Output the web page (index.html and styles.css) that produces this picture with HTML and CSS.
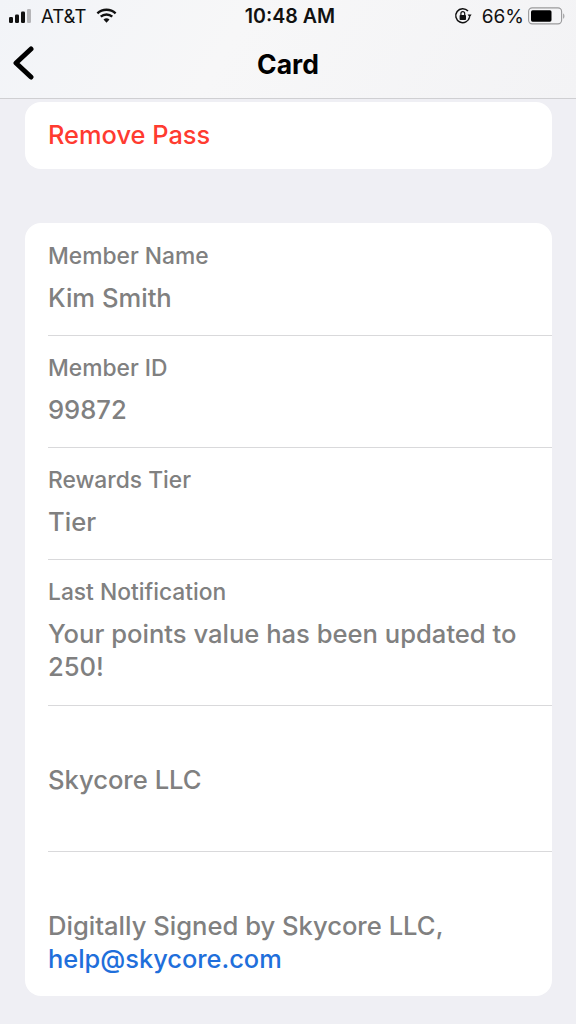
FILE: index.html
```html
<!DOCTYPE html>
<html>
<head>
 <meta charset="utf-8">
 <meta name="viewport" content="width=device-width, initial-scale=1.0">
 <title>Card</title>
 <link rel="stylesheet" href="styles.css">
</head>
<body>
<div class="Header">
 <div class="StatusBar">
  <div class="StatusLeft">
   <svg class="Signal" width="25" height="16" viewBox="0 0 25 16">
    <rect x="0" y="9" width="4" height="6" rx="1.2" fill="#111"/>
    <rect x="6" y="6.5" width="4" height="8.5" rx="1.2" fill="#111"/>
    <rect x="12" y="3.5" width="4" height="11.5" rx="1.2" fill="#111"/>
    <rect x="18" y="1" width="4" height="14" rx="1.2" fill="#b5b5b8"/>
   </svg>
   <span class="Carrier">AT&amp;T</span>
   <svg class="Wifi" width="21" height="16" viewBox="0 0 23 17">
    <path d="M1.5 5.6 A14.5 14.5 0 0 1 21.5 5.6" fill="none" stroke="#111" stroke-width="2.6"/>
    <path d="M5.2 9.3 A9.2 9.2 0 0 1 17.8 9.3" fill="none" stroke="#111" stroke-width="2.6"/>
    <path d="M8.2 12.4 A4.8 4.8 0 0 1 14.8 12.4 L11.5 16 Z" fill="#111"/>
   </svg>
  </div>
  <div class="StatusTime">10:48 AM</div>
  <div class="StatusRight">
   <svg class="RotationLock" width="18" height="18" viewBox="0 0 18 18">
    <path d="M15.6 10.2 A7 7 0 1 1 14 4" fill="none" stroke="#111" stroke-width="1.5"/>
    <path d="M13.6 7.4 L17.6 7.4 L15.6 10.4 Z" fill="#111"/>
    <rect x="5.6" y="8" width="6.4" height="5" rx="0.8" fill="#111"/>
    <path d="M6.9 8.2 V6.6 A1.9 1.9 0 0 1 10.7 6.6 V8.2" fill="none" stroke="#111" stroke-width="1.2"/>
   </svg>
   <span class="Battery">66%</span>
   <svg class="BatteryIcon" width="38" height="18" viewBox="0 0 38 18">
    <rect x="0.6" y="0.9" width="33" height="16" rx="3.6" fill="none" stroke="#9a9a9c" stroke-width="1.1"/>
    <rect x="3" y="3.2" width="20.5" height="11.5" rx="1.6" fill="#000"/>
    <path d="M35.2 6.4 C36.8 6.8 36.8 11.2 35.2 11.6 Z" fill="#9a9a9c"/>
   </svg>
  </div>
 </div>
 <div class="NavBar">
  <svg class="BackIcon" width="22" height="34" viewBox="0 0 22 34">
   <path d="M19 3 L4 17 L19 31" fill="none" stroke="#000" stroke-width="5" stroke-linecap="round" stroke-linejoin="round"/>
  </svg>
  <div class="NavTitle">Card</div>
 </div>
</div>

<div class="Content">
 <div class="Card RemoveCard">
  <span class="RemoveLink">Remove Pass</span>
 </div>

 <div class="Card InfoCard">
  <div class="Row">
   <div class="RowLabel">Member Name</div>
   <div class="RowValue">Kim Smith</div>
  </div>
  <div class="Row">
   <div class="RowLabel">Member ID</div>
   <div class="RowValue">99872</div>
  </div>
  <div class="Row">
   <div class="RowLabel">Rewards Tier</div>
   <div class="RowValue">Tier</div>
  </div>
  <div class="Row RowTall">
   <div class="RowLabel">Last Notification</div>
   <div class="RowValue">Your points value has been updated to 250!</div>
  </div>
  <div class="Row RowCentered">
   <div class="RowValue">Skycore LLC</div>
  </div>
  <div class="Row RowFooter">
   <div class="RowValue">Digitally Signed by Skycore LLC, <a class="HelpLink">help@skycore.com</a></div>
  </div>
 </div>
</div>
</body>
</html>
```
FILE: styles.css
```css
html, body {
 margin:0;
 padding:0;
}
body {
 width:576px;
 height:1024px;
 overflow:hidden;
 background:#EFEFF4;
 font-family:Inter, "Liberation Sans", sans-serif;
}

/* Header */
.Header {
 height:98px;
 border-bottom:1px solid #CFCFD2;
 background:linear-gradient(120deg, #F2F4F8 0%, #F7F7F8 40%, #F3F3F5 100%);
}
.StatusBar {
 display:flex;
 align-items:center;
 justify-content:space-between;
 height:32px;
 padding:0 10px 0 9px;
 color:#111111;
}
.StatusLeft,
.StatusRight {
 display:flex;
 align-items:center;
 width:190px;
}
.StatusLeft {
 width:195px;
}
.StatusRight {
 justify-content:flex-end;
}
.Carrier {
 margin-left:7px;
 margin-right:10px;
 font-size:18.5px;
}
.StatusTime {
 font-size:19.6px;
 font-weight:600;
}
.Battery {
 margin-left:10px;
 margin-right:4px;
 font-size:19px;
}
.NavBar {
 display:flex;
 align-items:center;
 justify-content:center;
 position:relative;
 box-sizing:border-box;
 height:66px;
 padding-bottom:2px;
}
.BackIcon {
 position:absolute;
 left:12px;
 top:14px;
}
.NavTitle {
 font-size:26.5px;
 font-weight:700;
 color:#000000;
}

/* Cards */
.Content {
 padding:3px 24px 0 25px;
}
.Card {
 background:#FFFFFF;
 border-radius:16px;
}
.RemoveCard {
 display:flex;
 align-items:center;
 box-sizing:border-box;
 height:67px;
 padding-left:23px;
 padding-bottom:2px;
 margin-bottom:54px;
}
.RemoveLink {
 font-size:25.4px;
 font-weight:500;
 color:#FF3B30;
}
.InfoCard {
 box-sizing:border-box;
 height:773px;
 padding-top:1px;
 padding-left:23px;
}

/* Rows */
.Row {
 box-sizing:border-box;
 height:112px;
 padding-top:17px;
 padding-right:24px;
 border-bottom:1px solid #D9D9DB;
}
.RowTall {
 height:146px;
}
.RowCentered {
 display:flex;
 align-items:center;
 height:146px;
 padding-top:2px;
}
.RowFooter {
 height:144px;
 padding-top:57px;
 border-bottom:none;
}
.RowLabel {
 font-size:22.8px;
 line-height:30px;
 font-weight:500;
 color:#808080;
}
.RowValue {
 margin-top:10px;
 font-size:25.6px;
 line-height:33px;
 font-weight:500;
 color:#808080;
}
.RowCentered .RowValue,
.RowFooter .RowValue {
 margin-top:0;
}
.HelpLink {
 font-size:25.4px;
 color:#1F6FDB;
}
```
